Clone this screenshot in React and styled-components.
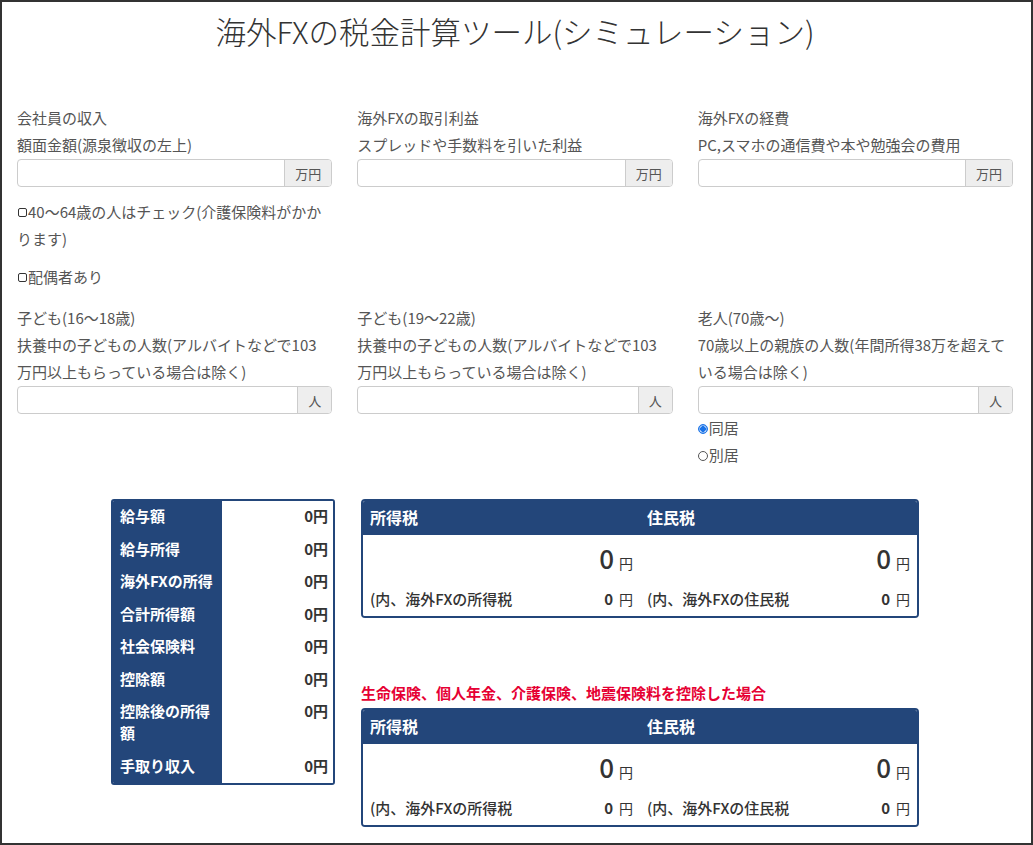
import React from 'react';
import styled, { createGlobalStyle } from 'styled-components';

const GlobalStyle = createGlobalStyle`
  html, body { margin: 0; padding: 0; background: #fff; }
  body {
    font-family: "Noto Sans CJK JP", "Noto Sans", sans-serif;
    color: #555;
    font-size: 15px;
  }
  * { box-sizing: border-box; }
`;

const NAVY = '#23467a';

const Page = styled.div`
  min-height: 100vh;
  border: 2px solid #333;
  padding: 10px 18px 0 15px;
`;

const Title = styled.h1`
  margin: 0;
  text-align: center;
  font-size: 30.5px;
  line-height: 38px;
  font-weight: 300;
  color: #333;
`;

const FormRow = styled.div`
  display: grid;
  grid-template-columns: repeat(3, 1fr);
  column-gap: 25px;
  margin-top: ${(p) => p.$top}px;
`;

const Field = styled.div`
  display: flex;
  flex-direction: column;
  min-width: 0;
`;

const Label = styled.div`
  line-height: 27px;
  font-size: 15px;
  color: #555;
`;

const InputGroup = styled.div`
  display: flex;
  height: 28px;
  margin-top: 1px;
  border: 1px solid #ccc;
  border-radius: 4px;
  overflow: hidden;
  background: #fff;
`;

const TextInput = styled.input`
  flex: 1;
  min-width: 0;
  border: none;
  outline: none;
  padding: 0 8px;
  font: inherit;
  font-size: 14px;
  color: #333;
  background: transparent;
`;

const Addon = styled.span`
  display: flex;
  align-items: center;
  padding: 0 10px;
  background: #eee;
  border-left: 1px solid #ccc;
  font-size: 13px;
  color: #555;
`;

const CheckLine = styled.label`
  display: block;
  margin-top: ${(p) => p.$top ?? 0}px;
  line-height: 27px;
  font-size: 15px;
  color: #555;
`;

const Checkbox = styled.input.attrs({ type: 'checkbox' })`
  appearance: none;
  -webkit-appearance: none;
  width: 9px;
  height: 9px;
  margin: 0 1px 0 1px;
  border: 1px solid #333;
  border-radius: 2px;
  vertical-align: middle;
  position: relative;
  top: -1px;
  background: #fff;
`;

const Radio = styled.input.attrs({ type: 'radio' })`
  appearance: none;
  -webkit-appearance: none;
  width: 10px;
  height: 10px;
  margin: 0 1px 0 0;
  border: 1px solid #555;
  border-radius: 50%;
  vertical-align: middle;
  position: relative;
  top: -1px;
  background: #fff;
  &:checked {
    border-color: #1a73e8;
    background: radial-gradient(circle, #1a73e8 0 2.6px, #fff 3.2px);
    box-shadow: inset 0 0 0 0.5px #1a73e8;
  }
`;

const Results = styled.div`
  display: flex;
  justify-content: center;
  align-items: flex-start;
  gap: 26px;
  margin-top: 31px;
`;

const SummaryTable = styled.div`
  width: 224px;
  display: grid;
  grid-template-columns: 109px 1fr;
  border: 2px solid ${NAVY};
  border-radius: 3px;
  overflow: hidden;
`;

const SummaryLabel = styled.div`
  background: ${NAVY};
  color: #fff;
  font-weight: 700;
  font-size: 15px;
  line-height: 22px;
  padding: 4px 7px 6.5px;
`;

const SummaryValue = styled.div`
  background: #fff;
  color: #333;
  font-weight: 700;
  font-size: 15px;
  line-height: 22px;
  padding: 4px 5px 6.5px;
  text-align: right;
`;

const TaxColumnStack = styled.div`
  width: 558px;
  display: flex;
  flex-direction: column;
`;

const Notice = styled.div`
  margin-top: 64px;
  margin-bottom: 4px;
  color: #e60033;
  font-weight: 700;
  font-size: 15px;
  line-height: 22px;
`;

const TaxBox = styled.div`
  border: 2px solid ${NAVY};
  border-radius: 4px;
  overflow: hidden;
`;

const TaxHeader = styled.div`
  display: grid;
  grid-template-columns: 1fr 1fr;
  background: ${NAVY};
  height: 34px;
`;

const TaxHeading = styled.div`
  padding: 0 7px;
  line-height: 33px;
  color: #fff;
  font-weight: 700;
  font-size: 16px;
`;

const TaxBody = styled.div`
  display: grid;
  grid-template-columns: 1fr 1fr;
  padding: 6px 0;
  background: #fff;
`;

const TaxCell = styled.div`
  padding: 0 7px;
  display: flex;
  flex-direction: column;
`;

const Amount = styled.div`
  height: 36px;
  display: flex;
  justify-content: flex-end;
  align-items: baseline;
  line-height: 34px;
  color: #333;
`;

const BigNumber = styled.span`
  font-size: 26px;
  font-weight: 500;
`;

const Yen = styled.span`
  font-size: 14px;
  margin-left: ${(p) => p.$gap ?? 5}px;
  font-weight: 400;
`;

const SubRow = styled.div`
  margin-top: 11px;
  display: flex;
  justify-content: space-between;
  line-height: 22px;
  font-size: 15px;
  font-weight: 500;
  color: #333;
`;

const SubValue = styled.span`
  font-weight: 700;
`;

const summary = [
  '給与額',
  '給与所得',
  '海外FXの所得',
  '合計所得額',
  '社会保険料',
  '控除額',
  '控除後の所得額',
  '手取り収入',
];

function TaxPanel() {
  return (
    <TaxBox>
      <TaxHeader>
        <TaxHeading>所得税</TaxHeading>
        <TaxHeading>住民税</TaxHeading>
      </TaxHeader>
      <TaxBody>
        {['(内、海外FXの所得税', '(内、海外FXの住民税'].map((t) => (
          <TaxCell key={t}>
            <Amount>
              <BigNumber>0</BigNumber>
              <Yen>円</Yen>
            </Amount>
            <SubRow>
              <span>{t}</span>
              <SubValue>
                0<Yen $gap={6}>円</Yen>
              </SubValue>
            </SubRow>
          </TaxCell>
        ))}
      </TaxBody>
    </TaxBox>
  );
}

export default function App() {
  return (
    <>
      <GlobalStyle />
      <Page>
        <Title>海外FXの税金計算ツール(シミュレーション)</Title>

        <FormRow $top={54}>
          <Field>
            <Label>会社員の収入</Label>
            <Label>額面金額(源泉徴収の左上)</Label>
            <InputGroup>
              <TextInput type="text" />
              <Addon>万円</Addon>
            </InputGroup>
            <CheckLine $top={11}>
              <Checkbox />
              40〜64歳の人はチェック(介護保険料がかかります)
            </CheckLine>
            <CheckLine $top={11}>
              <Checkbox />
              配偶者あり
            </CheckLine>
          </Field>
          <Field>
            <Label>海外FXの取引利益</Label>
            <Label>スプレッドや手数料を引いた利益</Label>
            <InputGroup>
              <TextInput type="text" />
              <Addon>万円</Addon>
            </InputGroup>
          </Field>
          <Field>
            <Label>海外FXの経費</Label>
            <Label>PC,スマホの通信費や本や勉強会の費用</Label>
            <InputGroup>
              <TextInput type="text" />
              <Addon>万円</Addon>
            </InputGroup>
          </Field>
        </FormRow>

        <FormRow $top={14}>
          <Field>
            <Label>子ども(16〜18歳)</Label>
            <Label>
              扶養中の子どもの人数(アルバイトなどで103
              <br />
              万円以上もらっている場合は除く)
            </Label>
            <InputGroup>
              <TextInput type="text" />
              <Addon>人</Addon>
            </InputGroup>
          </Field>
          <Field>
            <Label>子ども(19〜22歳)</Label>
            <Label>
              扶養中の子どもの人数(アルバイトなどで103
              <br />
              万円以上もらっている場合は除く)
            </Label>
            <InputGroup>
              <TextInput type="text" />
              <Addon>人</Addon>
            </InputGroup>
          </Field>
          <Field>
            <Label>老人(70歳〜)</Label>
            <Label>70歳以上の親族の人数(年間所得38万を超えている場合は除く)</Label>
            <InputGroup>
              <TextInput type="text" />
              <Addon>人</Addon>
            </InputGroup>
            <CheckLine>
              <Radio name="live" defaultChecked />
              同居
            </CheckLine>
            <CheckLine>
              <Radio name="live" />
              別居
            </CheckLine>
          </Field>
        </FormRow>

        <Results>
          <SummaryTable>
            {summary.map((s) => (
              <React.Fragment key={s}>
                <SummaryLabel>{s}</SummaryLabel>
                <SummaryValue>0円</SummaryValue>
              </React.Fragment>
            ))}
          </SummaryTable>
          <TaxColumnStack>
            <TaxPanel />
            <Notice>生命保険、個人年金、介護保険、地震保険料を控除した場合</Notice>
            <TaxPanel />
          </TaxColumnStack>
        </Results>
      </Page>
    </>
  );
}
